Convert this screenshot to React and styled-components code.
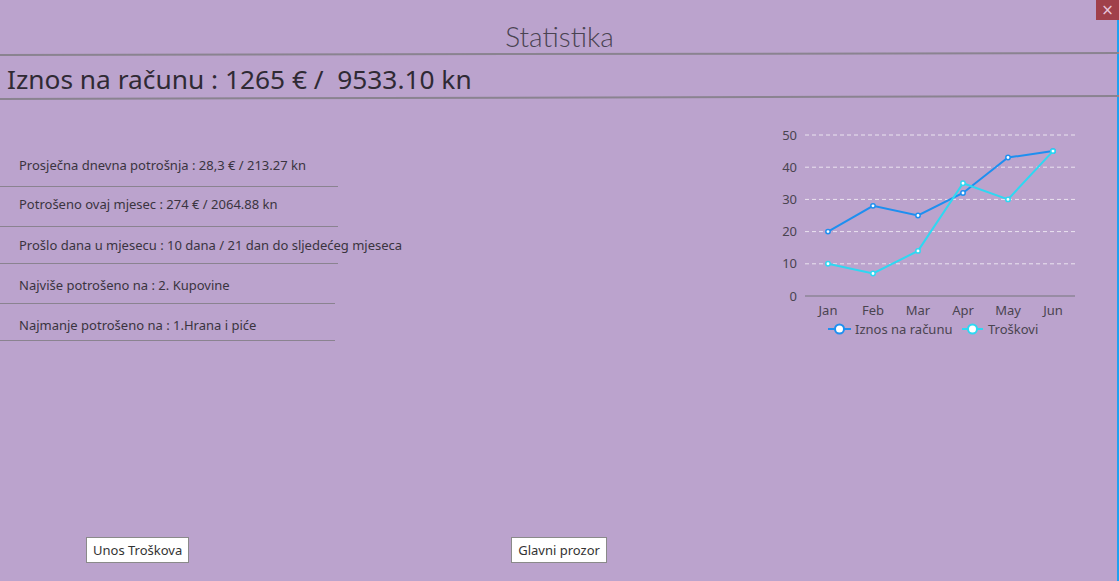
import React from 'react';
import styled, { createGlobalStyle } from 'styled-components';

const GlobalStyle = createGlobalStyle`
    html, body {
        margin: 0;
        padding: 0;
        background: #BBA3CD;
    }
    * { box-sizing: border-box; }
`;

// h = row height, pad = text offset from row top, w = underline width
const stats = [
    { text: 'Prosječna dnevna potrošnja : 28,3 € / 213.27 kn', w: 338, h: 40, pad: 9 },
    { text: 'Potrošeno ovaj mjesec : 274 € / 2064.88 kn', w: 338, h: 40, pad: 8 },
    { text: 'Prošlo dana u mjesecu : 10 dana / 21 dan do sljedećeg mjeseca', w: 338, h: 37, pad: 9 },
    { text: 'Najviše potrošeno na : 2. Kupovine', w: 335, h: 40, pad: 12 },
    { text: 'Najmanje potrošeno na : 1.Hrana i piće', w: 335, h: 37, pad: 12 },
];

const months = ['Jan', 'Feb', 'Mar', 'Apr', 'May', 'Jun'];
const iznos = [20, 28, 25, 32, 43, 45];
const troskovi = [10, 7, 14, 35, 30, 45];

const xAt = (i) => 58 + 45 * i;
const yAt = (v) => 175 - 3.22 * v;

function Series({ data, color }) {
    const pts = data.map((v, i) => `${xAt(i)},${yAt(v)}`).join(' ');
    return (
        <g>
            <polyline points={pts} fill="none" stroke={color} strokeWidth="2" />
            {data.map((v, i) => (
                <circle key={i} cx={xAt(i)} cy={yAt(v)} r="2.2" fill="#fff" stroke={color} strokeWidth="1.5" />
            ))}
        </g>
    );
}

function Chart() {
    return (
        <svg width="320" height="225" viewBox="0 0 320 225">
            {[10, 20, 30, 40, 50].map((v) => (
                <line key={v} x1="35" x2="305" y1={yAt(v)} y2={yAt(v)} stroke="#ffffff" strokeOpacity="0.7" strokeDasharray="4 3" strokeWidth="1" />
            ))}
            <line x1="35" x2="305" y1="175" y2="175" stroke="#8c8496" strokeWidth="1.5" />
            {[0, 10, 20, 30, 40, 50].map((v) => (
                <text key={v} x="27" y={yAt(v) + 4.5} textAnchor="end" fontSize="13" fill="#4a4450" fontFamily="'Noto Sans', sans-serif">{v}</text>
            ))}
            {months.map((m, i) => (
                <text key={m} x={xAt(i)} y="194" textAnchor="middle" fontSize="13" fill="#4a4450" fontFamily="'Noto Sans', sans-serif">{m}</text>
            ))}
            <Series data={iznos} color="#1E8FF0" />
            <Series data={troskovi} color="#2ED8F2" />
            <g fontSize="13" fill="#4a4450" fontFamily="'Noto Sans', sans-serif">
                <line x1="58" x2="81" y1="208" y2="208" stroke="#1E8FF0" strokeWidth="2" />
                <circle cx="69.5" cy="208" r="4.5" fill="#fff" stroke="#1E8FF0" strokeWidth="2" />
                <text x="85" y="212.5">Iznos na računu</text>
                <line x1="192" x2="213" y1="208" y2="208" stroke="#2ED8F2" strokeWidth="2" />
                <circle cx="202.5" cy="208" r="4.5" fill="#fff" stroke="#2ED8F2" strokeWidth="2" />
                <text x="218" y="212.5">Troškovi</text>
            </g>
        </svg>
    );
}

export default function App() {
    return (
        <Window>
            <GlobalStyle />
            <Close>×</Close>
            <EdgeStrip />
            <Title>Statistika</Title>
            <Rule tilt="-0.1deg" />
            <Balance>Iznos na računu : 1265 € /  9533.10 kn</Balance>
            <Rule tilt="-0.15deg" />
            <Content>
                <StatList>
                    {stats.map((s) => (
                        <StatRow key={s.text} w={s.w} h={s.h} pad={s.pad}>{s.text}</StatRow>
                    ))}
                </StatList>
                <ChartBox>
                    <Chart />
                </ChartBox>
            </Content>
            <Footer>
                <Button>Unos Troškova</Button>
                <Button>Glavni prozor</Button>
            </Footer>
        </Window>
    );
}

const Window = styled.div`
    position: relative;
    width: 1119px;
    height: 581px;
    background: #BBA3CD;
    display: flex;
    flex-direction: column;
    font-family: 'Noto Sans', 'Open Sans', sans-serif;
    color: #3a3440;
    overflow: hidden;
`;

const Close = styled.div`
    position: absolute;
    top: 0;
    right: 0;
    width: 23px;
    height: 20px;
    background: #A0404A;
    color: #e8c6dc;
    font-size: 15px;
    line-height: 20px;
    text-align: center;
    font-family: 'DejaVu Sans', sans-serif;
`;

const EdgeStrip = styled.div`
    position: absolute;
    top: 20px;
    right: 0;
    width: 2px;
    bottom: 0;
    background: #1EA0F0;
`;

const Title = styled.h1`
    margin: 0;
    padding-top: 19px;
    height: 54px;
    text-align: center;
    font-family: 'Lato', sans-serif;
    font-weight: 300;
    font-size: 28px;
    line-height: 34px;
    color: #4a4452;
`;

const Rule = styled.div`
    height: 1.5px;
    background: #8a8390;
    transform: rotate(${(p) => p.tilt});
    transform-origin: left center;
`;

const Balance = styled.h2`
    margin: 0;
    height: 42px;
    padding-left: 7px;
    font-weight: 400;
    font-size: 26.3px;
    line-height: 46px;
    white-space: pre;
    color: #2f2a34;
`;

const Content = styled.div`
    display: flex;
    justify-content: space-between;
    padding-top: 22px;
    flex: 1;
`;

const StatList = styled.div`
    display: flex;
    flex-direction: column;
    padding-top: 26px;
`;

const StatRow = styled.div`
    width: ${(p) => p.w}px;
    height: ${(p) => p.h}px;
    padding-left: 19px;
    padding-top: ${(p) => p.pad}px;
    font-size: 13px;
    white-space: nowrap;
    border-bottom: 1.5px solid #8a8390;
`;

const ChartBox = styled.div`
    margin-right: 29px;
`;

const Footer = styled.div`
    display: flex;
    gap: 322px;
    padding: 0 0 18px 86px;
`;

const Button = styled.button`
    height: 26px;
    padding: 0 6px;
    background: #fff;
    border: 1px solid #8a8a8a;
    font-family: 'Noto Sans', sans-serif;
    font-size: 13px;
    color: #333;
`;
